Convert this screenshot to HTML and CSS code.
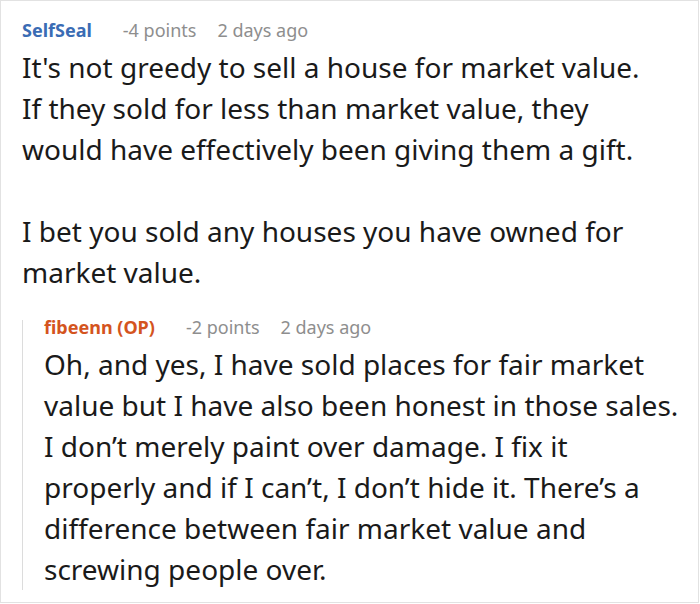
FILE: index.html
```html
<!DOCTYPE html>
<html lang="en">
<head>
<meta charset="utf-8">
<title>Comment thread</title>
<link rel="stylesheet" href="styles.css">
</head>
<body>
<div class="card">
  <div class="comment">
    <div class="meta">
      <span class="user user-blue">SelfSeal</span>
      <span class="points">-4 points</span>
      <span class="time">2 days ago</span>
    </div>
    <div class="body">
      <p>It's not greedy to sell a house for market value.<br>If they sold for less than market value, they<br>would have effectively been giving them a gift.</p>
      <p>I bet you sold any houses you have owned for<br>market value.</p>
    </div>
    <div class="reply">
      <div class="meta">
        <span class="user user-op">fibeenn (OP)</span>
        <span class="points">-2 points</span>
        <span class="time">2 days ago</span>
      </div>
      <div class="body">
        <p>Oh, and yes, I have sold places for fair market<br>value but I have also been honest in those sales.<br>I don’t merely paint over damage. I fix it<br>properly and if I can’t, I don’t hide it. There’s a<br>difference between fair market value and<br>screwing people over.</p>
      </div>
    </div>
  </div>
</div>
</body>
</html>
```

FILE: styles.css
```css
html, body {
  margin: 0;
  padding: 0;
  background: #ffffff;
}

.card {
  box-sizing: border-box;
  width: 699px;
  height: 603px;
  border: 1px solid #e2e2e2;
  padding: 22px 8px 0 21px;
  font-family: "Noto Sans", "Open Sans", sans-serif;
  color: #1a1a1a;
}

.meta {
  display: flex;
  align-items: baseline;
  font-size: 18px;
  line-height: 14px;
  margin-bottom: 10px;
  white-space: nowrap;
}

.user {
  font-weight: 700;
  margin-right: 31px;
}

.user-blue {
  color: #3a6cb4;
}

.user-op {
  color: #d4541e;
}

.points {
  color: #8e8e8e;
  margin-right: 21px;
}

.time {
  color: #8e8e8e;
}

.body {
  font-size: 28px;
  line-height: 41px;
}

.body p {
  margin: 0 0 41px 0;
}

.body p:last-child {
  margin-bottom: 0;
}

.reply {
  margin-top: 27px;
  border-left: 1px solid #dcdcdc;
  padding-left: 21px;
}
```
